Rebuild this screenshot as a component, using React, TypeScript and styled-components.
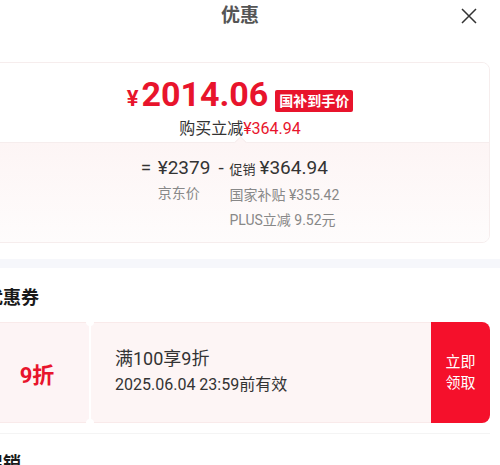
import React from 'react';
import styled, { createGlobalStyle } from 'styled-components';

const GlobalStyle = createGlobalStyle`
    html, body {
        margin: 0;
        padding: 0;
        background: #fff;
        overflow: hidden;
    }
    body {
        font-family: Roboto, "Noto Sans CJK SC", sans-serif;
        color: #1a1a1a;
    }
`;

// 优惠 弹层
function App() {
    return (
        <>
            <GlobalStyle />
            <Sheet>
                <Header>
                    <HeaderTitle>优惠</HeaderTitle>
                    <CloseBtn aria-label="关闭">
                        <svg width="16" height="16" viewBox="0 0 16 16">
                            <path d="M1 1 L15 15 M15 1 L1 15" stroke="#333" strokeWidth="1.5" fill="none" />
                        </svg>
                    </CloseBtn>
                </Header>

                <PriceCard>
                    <PriceTop>
                        <FinalRow>
                            <Yen>¥</Yen>
                            <FinalPrice>2014.06</FinalPrice>
                            <Badge>国补到手价</Badge>
                        </FinalRow>
                        <SaveText>
                            购买立减<RedText>¥364.94</RedText>
                        </SaveText>
                    </PriceTop>
                    <PriceBottom>
                        <Formula>
                            <Term>
                                <Op $w={17}>=</Op>
                                <TermStack>
                                    <FormulaMain>¥2379</FormulaMain>
                                    <FormulaSub>京东价</FormulaSub>
                                </TermStack>
                            </Term>
                            <Term>
                                <Op $w={11}>-</Op>
                                <TermStack>
                                    <FormulaMain>
                                        <SmallLabel>促销</SmallLabel>¥364.94
                                    </FormulaMain>
                                    <FormulaSub>国家补贴 ¥355.42</FormulaSub>
                                    <FormulaSub>PLUS立减 9.52元</FormulaSub>
                                </TermStack>
                            </Term>
                        </Formula>
                    </PriceBottom>
                </PriceCard>

                <Band />

                <SectionTitle>优惠券</SectionTitle>
                <Coupon>
                    <CouponLeft>9折</CouponLeft>
                    <CouponBody>
                        <CouponName>满100享9折</CouponName>
                        <CouponDate>2025.06.04 23:59前有效</CouponDate>
                    </CouponBody>
                    <GetBtn>
                        立即
                        <br />
                        领取
                    </GetBtn>
                </Coupon>
                <Line />
                <SectionTitle>促销</SectionTitle>
            </Sheet>
        </>
    );
}

const Sheet = styled.div`
    width: 530px;
    margin-left: -25px;
    padding: 0 15px;
    box-sizing: border-box;
`;

const Header = styled.div`
    position: relative;
    height: 50px;
    display: flex;
    justify-content: center;
    align-items: flex-start;
    padding-top: 3px;
    box-sizing: border-box;
`;

const HeaderTitle = styled.div`
    font-size: 19px;
    font-weight: bold;
    color: #555;
    line-height: 26px;
`;

const CloseBtn = styled.button`
    position: absolute;
    right: 13px;
    top: 8px;
    border: 0;
    background: none;
    padding: 0;
    width: 16px;
    height: 16px;
    cursor: pointer;
`;

const PriceCard = styled.div`
    margin-top: 12px;
    border: 1px solid #f6eded;
    border-radius: 8px;
    overflow: hidden;
`;

const PriceTop = styled.div`
    height: 79px;
    display: flex;
    flex-direction: column;
    align-items: center;
    padding-top: 13px;
    box-sizing: border-box;
    background: #fff;
    position: relative;
    &::after {
        content: '';
        position: absolute;
        left: 50%;
        bottom: -1px;
        width: 8px;
        height: 8px;
        background: #fdf5f5;
        border-left: 1px solid #f6eded;
        border-top: 1px solid #f6eded;
        transform: translateX(-4px) translateY(4px) rotate(45deg);
    }
`;

const FinalRow = styled.div`
    display: flex;
    align-items: baseline;
    color: #e8142c;
    line-height: 36px;
`;

const Yen = styled.span`
    font-size: 22px;
    font-weight: bold;
    margin-right: 3px;
`;

const FinalPrice = styled.span`
    font-size: 34px;
    font-weight: bold;
`;

const Badge = styled.span`
    margin-left: 7px;
    background: #e8142c;
    color: #fff;
    font-size: 14px;
    font-weight: bold;
    line-height: 22px;
    padding: 0 4px;
    border-radius: 2px;
    align-self: center;
    transform: translateY(4px);
`;

const SaveText = styled.div`
    margin-top: 1px;
    font-size: 16px;
    color: #333;
    line-height: 21px;
`;

const RedText = styled.span`
    color: #e8142c;
`;

const PriceBottom = styled.div`
    height: 100px;
    background: linear-gradient(#fdf5f5, #fefcfc);
    border-top: 1px solid #f6eded;
    display: flex;
    justify-content: center;
    padding-top: 12px;
    box-sizing: border-box;
`;

const Formula = styled.div`
    display: flex;
    gap: 8px;
`;

const Term = styled.div`
    display: flex;
    align-items: flex-start;
`;

const Op = styled.span<{ $w: number }>`
    width: ${(p) => p.$w}px;
    font-size: 19px;
    line-height: 26px;
    color: #333;
`;

const TermStack = styled.div`
    display: flex;
    flex-direction: column;
`;

const FormulaMain = styled.div`
    font-size: 19px;
    color: #333;
    line-height: 26px;
    display: flex;
    align-items: baseline;
`;

const SmallLabel = styled.span`
    font-size: 13px;
    margin-right: 4px;
`;

const FormulaSub = styled.div`
    font-size: 14px;
    color: #888;
    line-height: 25px;
`;

const Band = styled.div`
    height: 9px;
    margin: 16px -15px 0;
    background: #f6f7fb;
`;

const SectionTitle = styled.div`
    font-size: 18px;
    font-weight: bold;
    color: #1a1a1a;
    line-height: 24px;
    margin-top: 18px;
    margin-left: -5px;
`;

const Coupon = styled.div`
    margin-top: 12px;
    height: 101px;
    display: flex;
    border-radius: 8px;
`;

const CouponLeft = styled.div`
    width: 99px;
    padding-right: 6px;
    box-sizing: border-box;
    background: #fdf4f5;
    border: 1px solid #f9eaea;
    border-right: 0;
    border-radius: 8px 0 0 8px;
    display: flex;
    align-items: center;
    justify-content: center;
    color: #e8142c;
    font-size: 22px;
    font-weight: bold;
    position: relative;
    &::before,
    &::after {
        content: '';
        position: absolute;
        right: -5px;
        width: 8px;
        height: 8px;
        border-radius: 50%;
        background: #fff;
        z-index: 1;
    }
    &::before {
        top: -5px;
    }
    &::after {
        bottom: -5px;
    }
`;

const CouponBody = styled.div`
    flex: 1;
    margin-left: 2px;
    background: #fdf5f5;
    border-top: 1px solid #f9eaea;
    border-bottom: 1px solid #f9eaea;
    padding-left: 24px;
    display: flex;
    flex-direction: column;
    justify-content: center;
    padding-bottom: 4px;
`;

const CouponName = styled.div`
    font-size: 18px;
    color: #333;
    line-height: 27px;
`;

const CouponDate = styled.div`
    font-size: 16px;
    color: #333;
    line-height: 25px;
`;

const GetBtn = styled.button`
    width: 59px;
    border: 0;
    background: #f5102b;
    color: #fff;
    font-size: 15px;
    line-height: 21px;
    border-radius: 0 8px 8px 0;
    font-family: "Noto Sans CJK SC", sans-serif;
    cursor: pointer;
    padding: 0 0 4px;
`;

const Line = styled.div`
    height: 1px;
    background: #f4f4f4;
    margin-top: 10px;
`;

export default App;
